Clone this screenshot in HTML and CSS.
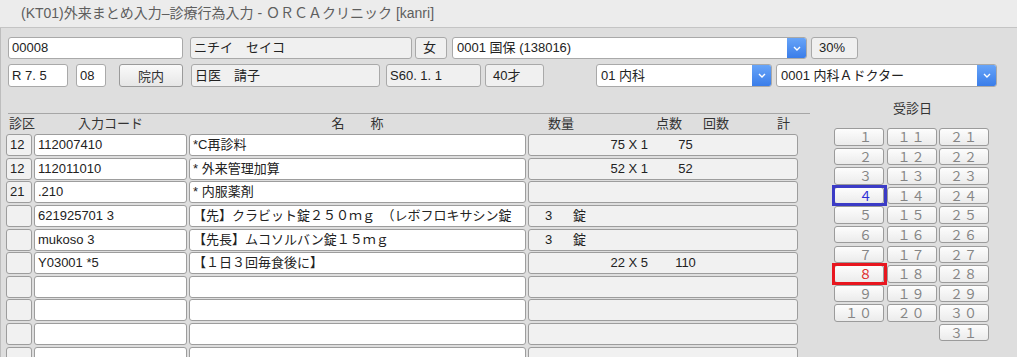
FILE: index.html
```html
<!DOCTYPE html>
<html lang="ja">
<head>
    <meta charset="UTF-8">
    <title>(KT01)外来まとめ入力–診療行為入力</title>
    <link rel="stylesheet" href="styles.css">
</head>
<body>
    <div class="titlebar">(KT01)外来まとめ入力–診療行為入力 - ＯＲＣＡクリニック [kanri]</div>

    <div class="form">
        <div class="row">
            <div class="field w-id">00008</div>
            <div class="field ro w-kana">ニチイ　セイコ</div>
            <div class="field ro w-sex">女</div>
            <div class="select w-ins">
                <span class="select-text">0001 国保 (138016)</span>
                <span class="drop"><svg width="8" height="5" viewBox="0 0 8 5"><polyline points="1,1 4,4 7,1" fill="none" stroke="#fff" stroke-width="1.4"/></svg></span>
            </div>
            <div class="field ro w-rate">30%</div>
        </div>
        <div class="row row2">
            <div class="field w-date">R 7. 5</div>
            <div class="field w-day">08</div>
            <button class="btn w-in">院内</button>
            <div class="field ro w-name">日医　請子</div>
            <div class="field ro w-birth">S60. 1. 1</div>
            <div class="field ro w-age">40才</div>
            <div class="select w-dept">
                <span class="select-text">01 内科</span>
                <span class="drop"><svg width="8" height="5" viewBox="0 0 8 5"><polyline points="1,1 4,4 7,1" fill="none" stroke="#fff" stroke-width="1.4"/></svg></span>
            </div>
            <div class="select w-doc">
                <span class="select-text">0001 内科Ａドクター</span>
                <span class="drop"><svg width="8" height="5" viewBox="0 0 8 5"><polyline points="1,1 4,4 7,1" fill="none" stroke="#fff" stroke-width="1.4"/></svg></span>
            </div>
        </div>
    </div>

    <div class="main">
        <div class="sheet">
            <div class="rule"></div>
            <div class="cols head">
                <div class="h-kubun">診区</div>
                <div class="h-center">入力コード</div>
                <div class="h-center">名　　称</div>
                <div class="h-nums">
                    <span class="h-qty">数量</span>
                    <span class="h-pt">点数</span>
                    <span class="h-cnt">回数</span>
                    <span class="h-sum">計</span>
                </div>
            </div>
            <div class="cols grid">
                <div class="cell g">12</div>
                <div class="cell">112007410</div>
                <div class="cell">*C再診料</div>
                <div class="cell g num"><span class="pt">75 X 1</span><span class="tot">75</span></div>

                <div class="cell g">12</div>
                <div class="cell">112011010</div>
                <div class="cell">* 外来管理加算</div>
                <div class="cell g num"><span class="pt">52 X 1</span><span class="tot">52</span></div>

                <div class="cell g">21</div>
                <div class="cell">.210</div>
                <div class="cell">* 内服薬剤</div>
                <div class="cell g num"></div>

                <div class="cell g"></div>
                <div class="cell">621925701 3</div>
                <div class="cell">【先】クラビット錠２５０ｍｇ　（レボフロキサシン錠</div>
                <div class="cell g num"><span class="qty">3</span>錠</div>

                <div class="cell g"></div>
                <div class="cell">mukoso 3</div>
                <div class="cell">【先長】ムコソルバン錠１５ｍｇ</div>
                <div class="cell g num"><span class="qty">3</span>錠</div>

                <div class="cell g"></div>
                <div class="cell">Y03001 *5</div>
                <div class="cell">【１日３回毎食後に】</div>
                <div class="cell g num"><span class="pt">22 X 5</span><span class="tot">110</span></div>

                <div class="cell g"></div><div class="cell"></div><div class="cell"></div><div class="cell g num"></div>
                <div class="cell g"></div><div class="cell"></div><div class="cell"></div><div class="cell g num"></div>
                <div class="cell g"></div><div class="cell"></div><div class="cell"></div><div class="cell g num"></div>
                <div class="cell g"></div><div class="cell"></div><div class="cell"></div><div class="cell g num"></div>
            </div>
        </div>

        <div class="visits">
            <div class="visits-label">受診日</div>
            <div class="days">
                <div class="day">　１</div><div class="day">１１</div><div class="day">２１</div>
                <div class="day">　２</div><div class="day">１２</div><div class="day">２２</div>
                <div class="day">　３</div><div class="day">１３</div><div class="day">２３</div>
                <div class="day mark-blue">　４</div><div class="day">１４</div><div class="day">２４</div>
                <div class="day">　５</div><div class="day">１５</div><div class="day">２５</div>
                <div class="day">　６</div><div class="day">１６</div><div class="day">２６</div>
                <div class="day">　７</div><div class="day">１７</div><div class="day">２７</div>
                <div class="day mark-red">　８</div><div class="day">１８</div><div class="day">２８</div>
                <div class="day">　９</div><div class="day">１９</div><div class="day">２９</div>
                <div class="day">１０</div><div class="day">２０</div><div class="day">３０</div>
                <div class="blank"></div><div class="blank"></div><div class="day">３１</div>
            </div>
        </div>
    </div>
</body>
</html>
```

FILE: styles.css
```css
body {
    margin: 0;
    width: 1017px;
    height: 357px;
    overflow: hidden;
    background: #dedede;
    box-shadow: inset 1px 0 #bdbdbd;
    font-family: "Liberation Sans", "Noto Sans CJK JP", sans-serif;
    font-size: 13px;
    color: #222;
}
.titlebar {
    height: 28px;
    box-sizing: border-box;
    padding-left: 21px;
    background: #ececec;
    border-bottom: 1px solid #c4c4c4;
    font-size: 14px;
    line-height: 27px;
    color: #5e5e5e;
    white-space: nowrap;
}

/* header form */
.form {
    padding: 9px 0 0 8px;
}
.row {
    display: flex;
    height: 22px;
}
.row2 {
    margin-top: 5px;
    height: 23px;
}
.field, .select, .btn {
    box-sizing: border-box;
    height: 100%;
    border: 1px solid #a9a9a9;
    border-radius: 3px;
    background: #fff;
    white-space: nowrap;
    overflow: hidden;
}
.field {
    padding: 0 3px;
    line-height: 20px;
}
.row2 .field { line-height: 21px; }
.field.ro {
    background: #f0f0f0;
}
.select {
    display: flex;
}
.select-text {
    flex: 1;
    padding-left: 4px;
    line-height: 20px;
    overflow: hidden;
}
.row2 .select-text { line-height: 21px; }
.drop {
    width: 19px;
    display: flex;
    align-items: center;
    justify-content: center;
    background: linear-gradient(#67a4f8, #3a7de9);
}
.btn {
    padding: 0;
    font: inherit;
    color: #333;
    background: linear-gradient(#fafafa, #e6e6e6);
    border-color: #9a9a9a;
}
.w-id { width: 175px; }
.w-kana { width: 222px; margin-left: 7px; }
.w-sex { width: 32px; margin-left: 3px; padding-left: 7px; }
.w-ins { width: 355px; margin-left: 5px; }
.w-rate { width: 47px; margin-left: 4px; padding-left: 7px; }
.w-date { width: 60px; }
.w-day { width: 30px; margin-left: 8px; }
.w-in { width: 64px; margin-left: 13px; }
.w-name { width: 189px; margin-left: 8px; }
.w-birth { width: 95px; margin-left: 6px; }
.w-age { width: 59px; margin-left: 4px; padding-left: 7px; }
.w-dept { width: 176px; margin-left: 52px; }
.w-doc { width: 221px; margin-left: 4px; }

/* main area */
.main {
    display: flex;
}
.sheet {
    width: 804px;
    margin: 26px 0 0 6px;
}
.rule {
    margin-left: 2px;
    border-top: 1px solid #a6a6a6;
}
.cols {
    display: grid;
    grid-template-columns: 26px 153px 337px 270px;
    column-gap: 2px;
}
.head {
    height: 20px;
    line-height: 19px;
    color: #333;
    white-space: nowrap;
}
.h-kubun { padding-left: 3px; }
.h-center { text-align: center; }
.h-nums { display: flex; }
.h-qty { margin-left: 20px; }
.h-pt { margin-left: 82px; }
.h-cnt { margin-left: 21px; }
.h-sum { margin-left: 48px; }

.grid {
    grid-auto-rows: 22px;
    row-gap: 1.6px;
    margin-top: 0.3px;
}
.cell {
    box-sizing: border-box;
    border: 1px solid #9d9d9d;
    border-radius: 3px;
    background: #fff;
    padding-left: 3px;
    line-height: 20px;
    white-space: nowrap;
    overflow: hidden;
}
.cell.g {
    background: #f1f1f1;
}
.cell.num {
    padding-left: 0;
}
.pt {
    display: inline-block;
    width: 119px;
    text-align: right;
}
.tot {
    display: inline-block;
    width: 75px;
    text-align: center;
}
.qty {
    display: inline-block;
    margin-left: 16px;
    width: 28px;
}

/* visit days */
.visits {
    margin-left: 24px;
    width: 157px;
}
.visits-label {
    margin-top: 14px;
    height: 16px;
    line-height: 16px;
    text-align: center;
    color: #333;
}
.days {
    margin-top: 11px;
    display: grid;
    grid-template-columns: repeat(3, 50px);
    column-gap: 2.5px;
    grid-auto-rows: 17.5px;
    row-gap: 2.1px;
}
.day {
    box-sizing: border-box;
    border: 1px solid #9b9b9b;
    border-radius: 3px;
    background: linear-gradient(#fdfdfd, #ebebeb);
    color: #858585;
    font-family: "Noto Sans CJK JP", sans-serif;
    font-size: 13px;
    line-height: 15px;
    text-align: center;
    letter-spacing: 1px;
}
.mark-blue, .mark-red {
    position: relative;
    z-index: 1;
}
.mark-blue::after, .mark-red::after {
    content: "";
    position: absolute;
    top: -3px;
    left: -3px;
    right: -4px;
    bottom: -3px;
    border: 3px solid #3b3bc6;
}
.mark-blue { color: #2d2dd6; }
.mark-red { color: #df2a2a; }
.mark-red::after { border-color: #e8161f; }
```
